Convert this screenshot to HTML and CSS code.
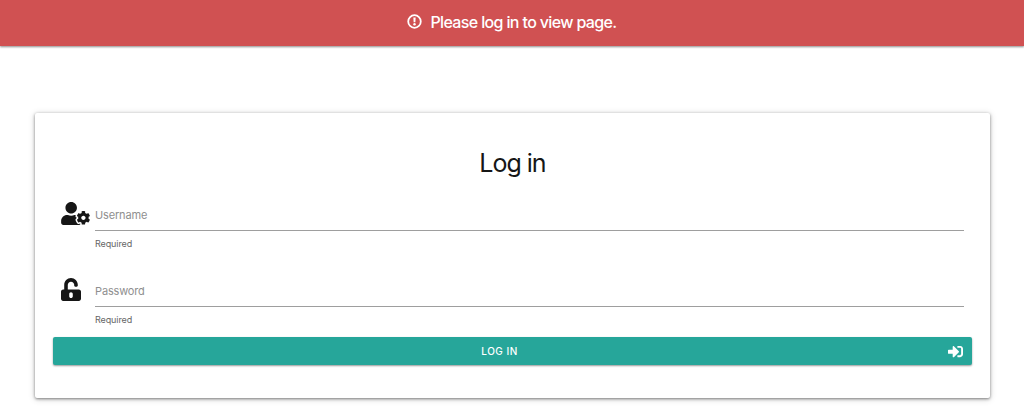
FILE: index.html
```html
<!DOCTYPE html>
<html lang="en">
<head>
<meta charset="utf-8">
<title>Log in</title>
<link rel="stylesheet" href="styles.css">
</head>
<body>
<header class="banner" role="alert">
  <svg class="banner-icon" viewBox="0 0 16 16" aria-hidden="true"><circle cx="8" cy="8" r="6.7" fill="none" stroke="currentColor" stroke-width="1.9"/><path d="M6.8 3.8h2.4l-.3 4.9H7.1z" fill="currentColor"/><circle cx="8" cy="11" r="1.3" fill="currentColor"/></svg>
  <span class="banner-text">Please log in to view page.</span>
</header>
<main class="card">
  <h1 class="title">Log in</h1>
  <form class="form">
    <div class="field">
      <svg class="icon icon-user" viewBox="0 0 640 512" aria-hidden="true"><path d="M610.5 373.3c2.6-14.1 2.6-28.5 0-42.6l25.8-14.9c3-1.7 4.3-5.2 3.3-8.5-6.7-21.6-18.2-41.2-33.2-57.4-2.3-2.5-6-3.1-9-1.4l-25.8 14.9c-10.9-9.3-23.4-16.5-36.9-21.3v-29.8c0-3.4-2.4-6.4-5.7-7.1-22.3-5-45-4.8-66.2 0-3.3.7-5.7 3.7-5.7 7.1v29.8c-13.5 4.8-26 12-36.9 21.3l-25.8-14.9c-2.9-1.7-6.7-1.1-9 1.4-15 16.2-26.5 35.8-33.2 57.4-1 3.3.4 6.8 3.3 8.5l25.8 14.9c-2.6 14.1-2.6 28.5 0 42.6l-25.8 14.9c-3 1.7-4.3 5.2-3.3 8.5 6.7 21.6 18.2 41.1 33.2 57.4 2.3 2.5 6 3.1 9 1.4l25.8-14.9c10.9 9.3 23.4 16.5 36.9 21.3v29.8c0 3.4 2.4 6.4 5.7 7.1 22.3 5 45 4.8 66.2 0 3.3-.7 5.7-3.7 5.7-7.1v-29.8c13.5-4.8 26-12 36.9-21.3l25.8 14.9c2.9 1.7 6.7 1.1 9-1.4 15-16.2 26.5-35.8 33.2-57.4 1-3.3-.4-6.8-3.3-8.5l-25.8-14.9zM496 400.5c-26.8 0-48.5-21.8-48.5-48.5s21.8-48.5 48.5-48.5 48.5 21.8 48.5 48.5-21.7 48.5-48.5 48.5zM224 256c70.7 0 128-57.3 128-128S294.7 0 224 0 96 57.3 96 128s57.3 128 128 128zm201.2 226.5c-2.3-1.2-4.6-2.6-6.8-3.9l-7.9 4.6c-6 3.4-12.8 5.3-19.6 5.3-10.9 0-21.4-4.6-28.9-12.6-18.3-19.8-32.3-43.9-40.2-69.6-5.5-17.7 1.9-36.4 17.9-45.7l7.9-4.6c-.1-2.6-.1-5.2 0-7.8l-7.9-4.6c-16-9.2-23.4-28-17.9-45.7.9-2.9 2.2-5.8 3.2-8.7-3.8-.3-7.5-1.2-11.4-1.2h-16.7c-22.2 10.2-46.9 16-72.9 16s-50.6-5.8-72.9-16h-16.7C60.2 288 0 348.2 0 422.4V464c0 26.5 21.5 48 48 48h352c10.1 0 19.5-3.2 27.2-8.5-1.2-3.8-2-7.7-2-11.8v-9.2z"/></svg>
      <div class="control">
        <label class="label">Username</label>
        <span class="helper">Required</span>
      </div>
    </div>
    <div class="field">
      <svg class="icon icon-lock" viewBox="0 0 448 512" aria-hidden="true"><path d="M400 256H152V152.9c0-39.6 31.7-72.5 71.3-72.9 40-.4 72.7 32.1 72.7 72v16c0 13.3 10.7 24 24 24h32c13.3 0 24-10.7 24-24v-16C376 68 307.5-.3 223.5 0 139.5.3 72 69.5 72 153.5V256H48c-26.5 0-48 21.5-48 48v160c0 26.5 21.5 48 48 48h352c26.5 0 48-21.5 48-48V304c0-26.5-21.5-48-48-48zM264 408c0 22.1-17.9 40-40 40s-40-17.9-40-40v-48c0-22.1 17.9-40 40-40s40 17.9 40 40v48z"/></svg>
      <div class="control">
        <label class="label">Password</label>
        <span class="helper">Required</span>
      </div>
    </div>
    <button class="submit" type="button">
      <span class="submit-text">Log in</span>
      <svg class="submit-icon" viewBox="0 0 512 512" aria-hidden="true"><path d="M416 448h-84c-6.6 0-12-5.4-12-12v-40c0-6.6 5.4-12 12-12h84c17.7 0 32-14.3 32-32V160c0-17.7-14.3-32-32-32h-84c-6.6 0-12-5.4-12-12V76c0-6.6 5.4-12 12-12h84c53 0 96 43 96 96v192c0 53-43 96-96 96zm-47-201L201 79c-15-15-41-4.5-41 17v96H24c-13.3 0-24 10.7-24 24v96c0 13.3 10.7 24 24 24h136v96c0 21.5 26 32 41 17l168-168c9.3-9.4 9.3-24.6 0-34z"/></svg>
    </button>
  </form>
</main>
</body>
</html>
```
FILE: styles.css
```css
* { box-sizing: border-box; }
body {
  min-height: 410px;
  margin: 0;
  background: #fff;
  color: #161616;
  font-family: Inter, "Liberation Sans", sans-serif;
}
.banner {
  display: flex;
  align-items: center;
  justify-content: center;
  gap: 8px;
  height: 46px;
  padding-bottom: 3px;
  background: #d05152;
  color: #fff;
  box-shadow: 0 1px 2px rgba(0, 0, 0, .45);
}
.banner-icon { width: 15px; height: 15px; }
.banner-text {
  font-size: 16px;
  font-weight: 500;
  letter-spacing: -.64px;
}
.card {
  height: 285px;
  margin: 67px 34px 0 35px;
  padding: 34px 18px 0;
  border-radius: 2px;
  background: #fff;
  box-shadow: 0 1px 3px rgba(0, 0, 0, .45), 0 1px 7px rgba(0, 0, 0, .18);
}
.title {
  margin: 0;
  font-size: 25px;
  font-weight: 400;
  line-height: 32px;
  letter-spacing: -1px;
  text-align: center;
}
.form { padding-top: 14px; }
.field {
  display: flex;
  height: 76px;
  padding: 0 8px;
}
.icon { flex: none; fill: #161616; }
.icon-user { width: 29px; height: 23px; margin: 9px 5px 0 0; }
.icon-lock { width: 20px; height: 23px; margin: 9px 14px 0 0; }
.control { flex: 1; }
.label {
  display: block;
  height: 38px;
  border-bottom: 1px solid #9e9e9e;
  color: #8f8f8f;
  font-size: 11px;
  line-height: 44px;
  letter-spacing: -.15px;
}
.helper {
  display: block;
  padding-top: 7px;
  color: #666;
  font-size: 9px;
  line-height: 12px;
  letter-spacing: -.1px;
}
.submit {
  display: flex;
  align-items: center;
  width: 100%;
  height: 28px;
  margin-top: -8px;
  padding: 0 9px 0 0;
  border: 0;
  border-radius: 2px;
  background: #26a69a;
  color: #fff;
  font: 500 10px Inter, "Liberation Sans", sans-serif;
  letter-spacing: .5px;
  text-transform: uppercase;
  box-shadow: 0 1px 2px rgba(0, 0, 0, .4);
}
.submit-text { flex: 1; padding-right: 2px; }
.submit-icon { width: 15px; height: 15px; fill: currentColor; }
```
